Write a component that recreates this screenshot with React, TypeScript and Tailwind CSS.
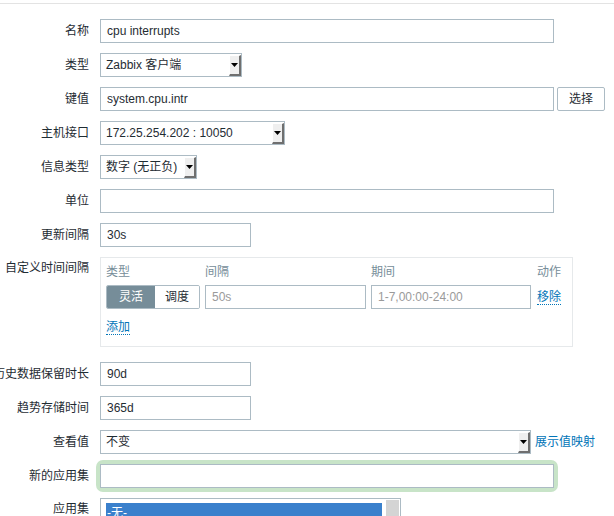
const font = "font-['Liberation_Sans','Noto_Sans_CJK_SC',sans-serif]"

const Label = ({ text, top }: { text: string; top?: boolean }) => (
    <div className={`w-[89px] shrink-0 flex justify-end whitespace-nowrap text-[12px] text-[#1f2c33] ${top ? "pt-[2px]" : "h-6 items-center"}`}>
        {text}
    </div>
)

const Input = ({ value, width, muted }: { value?: string; width: string; muted?: boolean }) => (
    <div className={`${width} h-6 border border-[#acbbc4] bg-white px-[6px] flex items-center text-[12px] ${muted ? "text-[#9a9a9a]" : "text-[#1f2c33]"}`}>
        {value}
    </div>
)

const Select = ({ value, width }: { value: string; width: string }) => (
    <div className={`${width} h-6 border border-[#acbbc4] bg-white pl-[5px] flex items-center justify-between text-[12px] text-[#1f2c33]`}>
        <span className="whitespace-nowrap">{value}</span>
        <div className="w-[12px] h-[21px] mr-[0px] bg-[#efefef] border-t border-l border-t-white border-l-white border-r-2 border-b-2 border-r-[#6f6f6f] border-b-[#6f6f6f] flex items-center justify-center">
            <svg width="7" height="4" viewBox="0 0 7 4">
                <polygon points="0,0 7,0 3.5,4" fill="#000" />
            </svg>
        </div>
    </div>
)

const Row = ({ label, children, top }: { label: string; children: React.ReactNode; top?: boolean }) => (
    <div className={`flex gap-[11px] ${top ? "items-start" : "items-center"}`}>
        <Label text={label} top={top} />
        {children}
    </div>
)

const LinkText = ({ text, dotted }: { text: string; dotted?: boolean }) => (
    <span className={`text-[12px] text-[#0275b8] ${dotted ? "border-b border-dotted border-[#0275b8] leading-[14px]" : ""}`}>
        {text}
    </span>
)

export default function App() {
    return (
        <div className={`w-[614px] h-[516px] overflow-hidden bg-white ${font}`}>
            <div className="mt-[3px] h-px bg-[#e3e3e3]" />
            <div className="pt-[15px] flex flex-col gap-[10px]">
                <Row label="名称">
                    <Input value="cpu interrupts" width="w-[454px]" />
                </Row>
                <Row label="类型">
                    <Select value="Zabbix 客户端" width="w-[142px]" />
                </Row>
                <Row label="键值">
                    <div className="flex gap-[3px]">
                        <Input value="system.cpu.intr" width="w-[454px]" />
                        <div className="w-[48px] h-6 border border-[#acbbc4] rounded-[2px] bg-white flex items-center justify-center text-[12px] text-[#1f2c33]">
                            选择
                        </div>
                    </div>
                </Row>
                <Row label="主机接口">
                    <Select value="172.25.254.202 : 10050" width="w-[185px]" />
                </Row>
                <Row label="信息类型">
                    <Select value="数字 (无正负)" width="w-[97px]" />
                </Row>
                <Row label="单位">
                    <Input width="w-[454px]" />
                </Row>
                <Row label="更新间隔">
                    <Input value="30s" width="w-[151px]" />
                </Row>
                <Row label="自定义时间间隔" top>
                    <div className="w-[473px] h-[90px] border border-[#e6e9eb] px-[5px] pt-[5px] text-[12px]">
                        <div className="flex gap-[5px] h-[18px] items-center text-[#768d99]">
                            <div className="w-[94px]">类型</div>
                            <div className="w-[161px]">间隔</div>
                            <div className="w-[160px]">期间</div>
                            <div className="ml-[1px]">动作</div>
                        </div>
                        <div className="flex gap-[5px] items-center mt-[4px]">
                            <div className="w-[94px] h-6 flex border border-[#acbbc4] rounded-[2px] overflow-hidden">
                                <div className="w-[48px] bg-[#768d99] text-white flex items-center justify-center">灵活</div>
                                <div className="flex-1 bg-white text-[#1f2c33] flex items-center justify-center">调度</div>
                            </div>
                            <Input value="50s" width="w-[161px]" muted />
                            <Input value="1-7,00:00-24:00" width="w-[160px]" muted />
                            <div className="ml-[1px]">
                                <LinkText text="移除" dotted />
                            </div>
                        </div>
                        <div className="mt-[9px]">
                            <LinkText text="添加" dotted />
                        </div>
                    </div>
                </Row>
                <div className="mt-[5px]">
                    <Row label="历史数据保留时长">
                        <Input value="90d" width="w-[151px]" />
                    </Row>
                </div>
                <Row label="趋势存储时间">
                    <Input value="365d" width="w-[151px]" />
                </Row>
                <Row label="查看值">
                    <div className="flex items-center gap-[4px]">
                        <Select value="不变" width="w-[431px]" />
                        <LinkText text="展示值映射" />
                    </div>
                </Row>
                <Row label="新的应用集">
                    <div className="rounded-[3px] shadow-[0_0_0_4px_#c8e4c8]">
                        <Input width="w-[454px]" />
                    </div>
                </Row>
                <Row label="应用集" top>
                    <div className="w-[301px] h-[40px] border border-[#acbbc4] bg-white flex pl-[5px] pt-[4px] gap-[4px]">
                        <div className="w-[276px] h-[20px] bg-[#3a80cc] text-white text-[12px] px-[1px] flex items-center">-无-</div>
                        <div className="w-[13px] bg-[#d4d4d4] -mt-[3px]" />
                    </div>
                </Row>
            </div>
        </div>
    )
}
